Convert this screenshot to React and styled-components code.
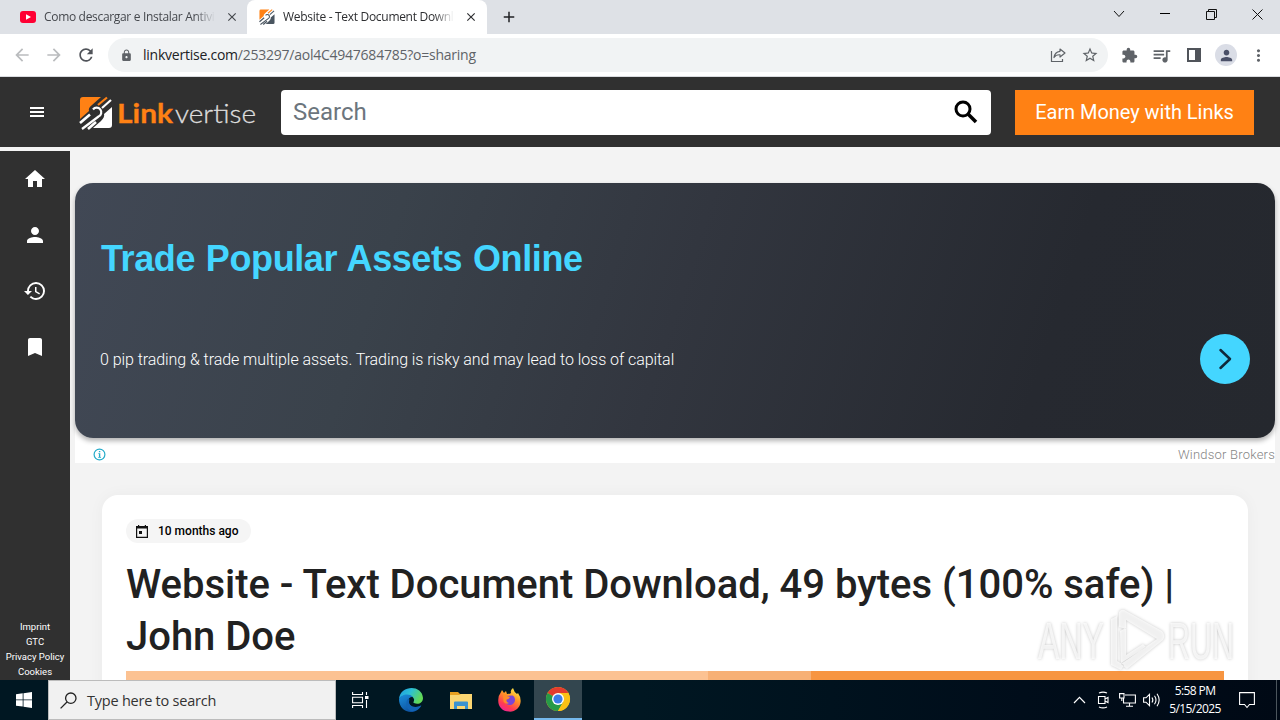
import React from 'react';
import styled, { createGlobalStyle } from 'styled-components';
import {
	MdArrowBack, MdArrowForward, MdRefresh, MdLock, MdStarBorder, MdExtension, MdQueueMusic,
	MdPerson, MdMoreVert, MdHome, MdHistory, MdBookmark, MdClose, MdAdd,
} from 'react-icons/md';

const GlobalStyle = createGlobalStyle`
	* {
		box-sizing: border-box;
	}
	body {
		margin: 0;
		overflow: hidden;
		font-family: Roboto, "Liberation Sans", sans-serif;
	}
	svg {
		display: block;
		flex: none;
		overflow: visible;
	}
`;

const Screen = styled.div`
	position: relative;
	width: 1280px;
	height: 720px;
	display: flex;
	flex-direction: column;
	overflow: hidden;
	background: #f3f3f3;
`;

/* browser */
const TabStrip = styled.div`
	height: 34px;
	flex: none;
	display: flex;
	justify-content: space-between;
	background: #dee1e6;
	color: #202124;
`;

const Tabs = styled.div`
	display: flex;
	align-items: center;
`;

const Tab = styled.div`
	width: ${p => p.$width}px;
	height: 34px;
	padding: 0 ${p => p.$right}px 0 ${p => p.$left}px;
	display: flex;
	align-items: center;
	background: ${p => (p.$active ? '#fff' : 'transparent')};
	border-radius: 8px 8px 0 0;
	color: ${p => (p.$active ? '#2d2e31' : '#45484d')};
`;

const TabTitle = styled.div`
	flex: 1;
	margin: 0 10px 0 ${p => p.$gap}px;
	overflow: hidden;
	white-space: nowrap;
	font: 12px/16px "Open Sans", "Noto Sans", sans-serif;
	letter-spacing: ${p => p.$spacing}px;
	mask-image: linear-gradient(to right, #000 88%, transparent 100%);
`;

const NewTab = styled.div`
	margin-left: 13px;
`;

const WindowButtons = styled.div`
	width: 184px;
	height: 28px;
	display: grid;
	grid-template-columns: repeat(4, 46px);
	place-items: center;
`;

const Toolbar = styled.div`
	height: 43px;
	flex: none;
	display: flex;
	align-items: center;
	padding: 0 11px 0 12px;
	background: #fff;
	border-bottom: 1px solid #dadce0;
	color: #5f6368;
`;

const NavButtons = styled.div`
	width: 96px;
	display: flex;
	gap: 12px;
	color: ${p => p.color};
`;

const AddressBar = styled.div`
	width: 1000px;
	height: 34px;
	flex: none;
	display: flex;
	align-items: center;
	padding: 0 9px 0 12px;
	border-radius: 17px;
	background: #f1f3f4;
`;

const Url = styled.div`
	flex: 1;
	margin-left: 10px;
	font: 14px/20px "Open Sans", "Noto Sans", sans-serif;
	letter-spacing: -0.24px;
	color: #5f6368;

	span {
		color: #202124;
	}
`;

const Extensions = styled.div`
	display: flex;
	align-items: center;
	margin-left: 13px;
`;

const Avatar = styled.div`
	width: 22px;
	height: 22px;
	margin: 0 12px 0 14px;
	display: grid;
	place-items: center;
	border-radius: 50%;
	background: #dadde6;
	color: #4a5068;
`;

/* site */
const Header = styled.header`
	height: 70px;
	flex: none;
	display: flex;
	align-items: center;
	padding: 0 26px 1px 30px;
	background: #303030;
	color: #fff;
`;

const Logo = styled.div`
	width: 177px;
	margin: 3px 25px 0 35px;
`;

const SearchField = styled.div`
	width: 710px;
	height: 45px;
	flex: none;
	display: flex;
	align-items: center;
	justify-content: space-between;
	margin-top: 1px;
	padding: 0 13px 0 12px;
	border-radius: 4px;
	background: #fff;
	color: #6c757d;
	font-size: 24px;
`;

const EarnButton = styled.div`
	width: 239px;
	height: 45px;
	flex: none;
	margin: 1px 0 0 24px;
	display: grid;
	place-items: center;
	background: #ff8114;
	color: #fff;
	font-size: 20px;
	letter-spacing: -0.04px;
	white-space: nowrap;
`;

const Page = styled.div`
	height: 533px;
	flex: none;
	display: flex;
	overflow: hidden;
`;

const Sidebar = styled.nav`
	width: 70px;
	height: 529px;
	margin-top: 4px;
	flex: none;
	display: flex;
	flex-direction: column;
	justify-content: space-between;
	background: #303030;
	color: #fff;
`;

const SideIcons = styled.div`
	display: flex;
	flex-direction: column;
	align-items: center;
	gap: 32px;
	padding-top: 16px;
`;

const SideLinks = styled.div`
	display: flex;
	flex-direction: column;
	align-items: center;
	padding-bottom: 1px;
	font-size: 9.5px;
	line-height: 15px;
	letter-spacing: 0;
	white-space: nowrap;
`;

const Content = styled.main`
	width: 1210px;
	padding: 36px 5px 0;
	display: flex;
	flex-direction: column;
`;

const Ad = styled.div`
	height: 280px;
	flex: none;
	background: #fff;
	border-radius: 18px 18px 0 0;
`;

const Banner = styled.div`
	height: 255px;
	padding: 51px 25px 0;
	border-radius: 18px;
	background: linear-gradient(108deg, #414855 0%, #3a424b 26%, #32363f 50%, #262930 80%, #25282e 100%);
	box-shadow: 0 3px 5px rgba(0, 0, 0, 0.3);
`;

const BannerTitle = styled.div`
	padding-left: 1px;
	font: bold 36px/50px "Liberation Sans", sans-serif;
	letter-spacing: -0.4px;
	word-spacing: 1.2px;
	color: #44d6ff;
	white-space: nowrap;
`;

const BannerRow = styled.div`
	margin-top: 50px;
	display: flex;
	align-items: center;
	justify-content: space-between;
	color: #fff;
	font-size: 16px;
	font-weight: 300;
	letter-spacing: -0.065px;
`;

const RoundButton = styled.div`
	width: 50px;
	height: 50px;
	border-radius: 50%;
	display: grid;
	place-items: center;
	background: #44d6ff;
`;

const AdFooter = styled.div`
	height: 25px;
	padding: 8px 0 0 18px;
	display: flex;
	align-items: center;
	justify-content: space-between;
	color: #858585;
	font: 300 13px/17px Roboto, sans-serif;
	letter-spacing: 0.22px;
`;

const Card = styled.section`
	width: 1146px;
	height: 240px;
	flex: none;
	margin: 32px 0 0 27px;
	padding: 24px 24px 0;
	background: #fff;
	border-radius: 16px 16px 0 0;
	box-shadow: 0 0 16px rgba(0, 0, 0, 0.04);
`;

const DateChip = styled.div`
	width: 125px;
	height: 24px;
	display: flex;
	align-items: center;
	gap: 10px;
	padding-left: 10px;
	border-radius: 12px;
	background: #f5f5f5;
	color: #000;
	font-size: 12px;
	font-weight: 500;
	white-space: nowrap;
`;

const Title = styled.h1`
	margin: 16px 0 0;
	font-size: 40px;
	font-weight: 500;
	line-height: 52px;
	letter-spacing: -0.02px;
	color: #212121;
	white-space: nowrap;
`;

const OrangeBar = styled.div`
	height: 40px;
	margin-top: 8px;
	background: linear-gradient(to right, #fcc292 0 53%, #f7b075 53% 62.4%, #f79541 62.4%);
`;

/* desktop */
const Taskbar = styled.div`
	height: 40px;
	flex: none;
	display: flex;
	justify-content: space-between;
	background: linear-gradient(to right, #001722 0%, #001722 50%, #000d1a 80%, #000915 100%);
	color: #fff;
`;

const TaskGroup = styled.div`
	display: flex;
	align-items: center;
`;

const TaskButton = styled.div`
	width: ${p => p.$width}px;
	height: 40px;
	display: grid;
	place-items: center;
	background: ${p => (p.$active ? '#33464f' : 'transparent')};
	border-bottom: ${p => (p.$active ? '2px solid #76b9ed' : '0')};
`;

const TaskSearch = styled.div`
	width: 288px;
	height: 40px;
	display: flex;
	align-items: center;
	gap: 10px;
	padding: 1px 0 0 11px;
	background: #f1f1f1;
	border: 1px solid #bcbcbc;
	color: #333;
	font: 14.5px/20px "Open Sans", sans-serif;
	letter-spacing: -0.23px;
`;

const TrayIcons = styled.div`
	display: grid;
	grid-template-columns: repeat(4, 24px);
	place-items: center;
`;

const Clock = styled.div`
	width: 64px;
	margin-right: 12px;
	text-align: center;
	font: 12px/18px "Open Sans", sans-serif;
	letter-spacing: -0.6px;
`;

const Notices = styled.div`
	width: 38px;
	height: 40px;
	display: flex;
	align-items: center;
	margin-right: 3px;
	border-right: 1px solid #4b555c;
`;

const Watermark = styled.div`
	position: absolute;
	left: 1032px;
	top: 604px;
	filter: drop-shadow(0 0 1.5px rgba(0, 0, 0, 0.3));
`;

const YoutubeIcon = () => (
	<svg width="16" height="12" viewBox="0 0 16 12">
		<rect width="16" height="12" rx="3" fill="#ff0033" />
		<path d="M6 3.2L11 6L6 8.8Z" fill="#fff" />
	</svg>
);

const Mark = ({ size, light = '#fff' }) => (
	<svg width={size} height={size} viewBox="0 0 34 34" fill="none">
		<path d="M4 1H22L13 9Q9 12 10 15L1 23V4Q1 1 4 1Z" fill="#ff8114" />
		<path d="M33 11V29Q33 32 30 32H14L22 25Q26 21 25 18Z" fill={light} />
		<path d="M19 9L28 1.5" stroke="#ff8114" strokeWidth="2.2" />
		<path d="M23 12L32 4" stroke={light} strokeWidth="2.2" />
		<path d="M1 27L11 18.5M9 33L17 26" stroke={light} strokeWidth="2.6" />
		<path d="M14 13.5A4.6 4.6 0 1 1 19.5 20.5L3 33" stroke={light} strokeWidth="2.2" />
	</svg>
);

const LogoArt = () => (
	<svg width="177" height="34" viewBox="0 0 177 34" fontFamily="Lato, sans-serif">
		<Mark size={34} />
		<text x="38" y="27" fontSize="27" fontWeight="700" fill="#ff8114" stroke="#ff8114" strokeWidth="0.3" textLength="56" lengthAdjust="spacingAndGlyphs">Link</text>
		<text x="96" y="27" fontSize="26" fontWeight="300" fill="#ddd" stroke="#ddd" strokeWidth="0.3" textLength="81" lengthAdjust="spacingAndGlyphs">vertise</text>
	</svg>
);

const MenuIcon = () => (
	<svg width="14" height="10" viewBox="0 0 14 10">
		<path d="M0 0H14V2H0ZM0 4H14V6H0ZM0 8H14V10H0Z" fill="#fff" />
	</svg>
);

const SearchIcon = () => (
	<svg width="24" height="24" viewBox="0 0 24 24" fill="none" stroke="#000" strokeWidth="3">
		<circle cx="9" cy="9" r="7" />
		<path d="M14 14L22 22" strokeWidth="3.6" />
	</svg>
);

const ShareIcon = () => (
	<svg width="16" height="16" viewBox="0 0 16 16" fill="none" stroke="#5f6368" strokeWidth="1.2">
		<path d="M1.5 4V14.5H12.5V12" />
		<path d="M10 2L15 6L10 10V7.8Q6 7.5 4 10.5Q4.7 5 10 4.3Z" strokeLinejoin="round" />
	</svg>
);

const PanelIcon = () => (
	<svg width="14" height="14" viewBox="0 0 14 14">
		<path d="M1 1H13V13H1Z" fill="none" stroke="#50545a" strokeWidth="2" />
		<path d="M8 1H13V13H8Z" fill="#50545a" />
	</svg>
);

const CalendarIcon = () => (
	<svg width="12" height="13" viewBox="0 0 12 13">
		<path d="M.6 1.6H11.4V12.4H.6Z" fill="none" stroke="#111" strokeWidth="1.2" />
		<path d="M0 1H12V3.5H0ZM2 0H3.2V2H2ZM8.8 0H10V2H8.8ZM3 6H6V9H3Z" fill="#111" />
	</svg>
);

const InfoIcon = () => (
	<svg width="13" height="13" viewBox="0 0 13 13">
		<circle cx="6.5" cy="6.5" r="5.4" fill="none" stroke="#24abc9" strokeWidth="1.2" />
		<path d="M5.9 3H7.3V4.3H5.9ZM5.3 5.3H7.3V9H8V9.8H5.2V9H5.9V6H5.3Z" fill="#24abc9" />
	</svg>
);

const WindowsIcon = () => (
	<svg width="16" height="16" viewBox="0 0 16 16" fill="#fff">
		<path d="M0 2.2L6.7 1.3V7.5H0ZM7.5 1.2L16 0V7.5H7.5ZM0 8.3H6.7V14.6L0 13.7ZM7.5 8.3H16V16L7.5 14.8Z" />
	</svg>
);

const TaskSearchIcon = () => (
	<svg width="17" height="17" viewBox="0 0 17 17" fill="none" stroke="#222" strokeWidth="1.3">
		<circle cx="10.8" cy="6.2" r="5.2" />
		<path d="M7 10L.6 16.4" />
	</svg>
);

const TaskViewIcon = () => (
	<svg width="17" height="16" viewBox="0 0 17 16" fill="none" stroke="#fff" strokeWidth="1.1">
		<path d="M.6 0V2.5H10.5V0M.6 16V13.5H10.5V16M.6 5.3H10.5V10.7H.6ZM14.5 0V3M14.5 8V16" />
		<path d="M13 4H16.5V7H13Z" fill="#fff" stroke="none" />
	</svg>
);

const EdgeIcon = () => (
	<svg width="24" height="24" viewBox="0 0 24 24">
		<defs>
			<linearGradient id="edgeTop" x1="0" y1="0" x2="1" y2="0.4">
				<stop offset="0" stopColor="#1f9be2" />
				<stop offset="0.5" stopColor="#2cc0d5" />
				<stop offset="1" stopColor="#62d957" />
			</linearGradient>
			<linearGradient id="edgeLow" x1="0" y1="0" x2="0.6" y2="1">
				<stop offset="0" stopColor="#1b8edb" />
				<stop offset="1" stopColor="#0c4f9e" />
			</linearGradient>
		</defs>
		<path d="M0 11C1-3 23-4 24 10C24 15 19 17 15 15C13.6 14.3 15.5 13.4 15 11C13 6 3 6 0 11Z" fill="url(#edgeTop)" />
		<path d="M0 11C2 6 11 5 14 9C9 8 8 14 11 17C14 20 19 19.6 22 17.5C19 24 12 25 8 23.3C3 21.5 0 17 0 11Z" fill="url(#edgeLow)" />
		<path d="M8.5 11C5 18 10 25 16 22.8C19 22 21 20 22.4 17.3C16 21 8 18 10.5 11.5Z" fill="#1264b5" />
	</svg>
);

const FolderIcon = () => (
	<svg width="22" height="19" viewBox="0 0 22 19">
		<path d="M0 1H8L10 3H21V8H0Z" fill="#e8a020" />
		<path d="M0 4H9L11 3H22V18H0Z" fill="#fbd672" />
		<path d="M4 11.5Q4 10.5 5 10.5H17Q18 10.5 18 11.5V18H15V15H7V18H4Z" fill="#3b92cf" />
	</svg>
);

const FirefoxIcon = () => (
	<svg width="23" height="24" viewBox="0 0 23 24">
		<defs>
			<linearGradient id="fox" x1="0.8" y1="0" x2="0.25" y2="1">
				<stop offset="0" stopColor="#fff04a" />
				<stop offset="0.4" stopColor="#ff9426" />
				<stop offset="0.75" stopColor="#ff3b52" />
				<stop offset="1" stopColor="#ee2299" />
			</linearGradient>
		</defs>
		<path d="M2.5 5L4 2L6 5L8 3L9 6Q12 6 13 5Q12 2 15 0Q16 4 19 6L20 5Q23 9 22.6 14C22 20 17 24 11 23.6C4 23.3-.3 18 .3 11.5Q.6 7 2.5 5Z" fill="url(#fox)" />
		<path d="M8 8L14.5 7.5C19 10 17 17 12 17C8 17 6 14 7.3 11.4L11 11Z" fill="#7b45d6" />
		<path d="M5 7Q7 6 9 8L12 9Q11 11 8.5 11.5Q8 14 11 15Q8 17 5.5 13.5Z" fill="#ff8b28" />
	</svg>
);

const ChromeIcon = () => (
	<svg width="24" height="24" viewBox="0 0 24 24">
		<circle cx="12" cy="12" r="12" fill="#fbc116" />
		<path d="M12 12L1.6 6A12 12 0 0 1 22.4 6Z" fill="#e33b2e" />
		<path d="M12 12L1.6 6A12 12 0 0 0 12 24L17.2 15Z" fill="#269a48" />
		<path d="M12 6H22.4A12 12 0 0 1 12 24L17.2 15Z" fill="#fbc116" />
		<circle cx="12" cy="12" r="6" fill="#fff" />
		<circle cx="12" cy="12" r="4.6" fill="#3b7de9" />
	</svg>
);

const Tray = () => (
	<TrayIcons>
		<svg width="13" height="8" viewBox="0 0 13 8" fill="none" stroke="#fff" strokeWidth="1.2"><path d="M1 7L6.5 1.3L12 7" /></svg>
		<svg width="12" height="18" viewBox="6 0 12 18" fill="none" stroke="#fff" strokeWidth="1.1">
			<path d="M7.5 5.5H14V12.5H7.5ZM14 8L17 6.5V11.5L14 10M8 2Q12 .2 16 2M8 16Q12 17.8 16 16" />
		</svg>
		<svg width="17" height="14" viewBox="0 0 17 14" fill="none" stroke="#fff" strokeWidth="1.1">
			<path d="M6 2H16.4V10H4.5V5M.6 .6H5V5H.6ZM2.8 5V8M10.5 10V13M7 13.2H14" />
		</svg>
		<svg width="17" height="14" viewBox="0 0 17 14" fill="none" stroke="#fff" strokeWidth="1.1">
			<path d="M.6 4.8H3L6.5 1.3V12.7L3 9.2H.6ZM9 4.5Q10.7 7 9 9.5M11.5 2.7Q14.5 7 11.5 11.3M14 .8Q18.3 7 14 13.2" />
		</svg>
	</TrayIcons>
);

const AnyRun = () => (
	<Watermark>
		<svg width="206" height="70" viewBox="0 0 206 70" fill="#fff" fillOpacity="0.72" fontFamily="Liberation Sans, sans-serif">
			<text x="6" y="55" fontSize="52" textLength="66" lengthAdjust="spacingAndGlyphs">ANY</text>
			<text x="136" y="55" fontSize="52" textLength="66" lengthAdjust="spacingAndGlyphs">RUN</text>
			<path fillRule="evenodd" d="M79 15L85 12V57L92 61L89 66L79 61ZM87 8Q90 4 94 7L130 27Q134 31 131 36L95 65L89 60L125 35L94 16V25L87 23ZM88 27L94 24V51L111 40L114 43L89 59Z" />
		</svg>
	</Watermark>
);

const App = () => {
	const links = ['Imprint', 'GTC', 'Privacy Policy', 'Cookies'];
	return (
		<Screen>
			<GlobalStyle />
			<TabStrip>
				<Tabs>
					<Tab $width={247} $left={20} $right={8}>
						<YoutubeIcon />
						<TabTitle $gap={8} $spacing={-0.32}>Como descargar e Instalar Antivirus</TabTitle>
						<MdClose size={14} />
					</Tab>
					<Tab $active $width={240} $left={12} $right={9}>
						<Mark size={16} light="#4a5560" />
						<TabTitle $gap={8} $spacing={-0.3}>Website - Text Document Download</TabTitle>
						<MdClose size={14} />
					</Tab>
					<NewTab><MdAdd size={18} /></NewTab>
				</Tabs>
				<WindowButtons>
					<svg width="12" height="8" viewBox="0 0 12 8" fill="none" stroke="#111"><path d="M1 1L6 6.5L11 1" /></svg>
					<svg width="10" height="2" viewBox="0 0 10 2"><path d="M0 0H10V1H0Z" /></svg>
					<svg width="11" height="11" viewBox="0 0 11 11" fill="none" stroke="#111"><path d="M.5 2.5H8.5V10.5H.5ZM2.5 2.5V.5H10.5V8.5H8.5" /></svg>
					<svg width="11" height="11" viewBox="0 0 11 11" fill="none" stroke="#111"><path d="M.5 .5L10.5 10.5M10.5 .5L.5 10.5" /></svg>
				</WindowButtons>
			</TabStrip>
			<Toolbar>
				<NavButtons color="#babcbe">
					<MdArrowBack size={20} />
					<MdArrowForward size={20} />
					<MdRefresh size={20} color="#505359" />
				</NavButtons>
				<AddressBar>
					<MdLock size={13} />
					<Url><span>linkvertise.com</span>/253297/aol4C4947684785?o=sharing</Url>
					<ShareIcon />
					<MdStarBorder size={18} style={{ marginLeft: 15 }} />
				</AddressBar>
				<Extensions>
					<MdExtension size={17} />
					<MdQueueMusic size={21} style={{ margin: '0 15px 0 13px' }} />
					<PanelIcon />
					<Avatar><MdPerson size={17} /></Avatar>
					<MdMoreVert size={19} />
				</Extensions>
			</Toolbar>
			<Header>
				<MenuIcon />
				<Logo><LogoArt /></Logo>
				<SearchField>
					Search
					<SearchIcon />
				</SearchField>
				<EarnButton>Earn Money with Links</EarnButton>
			</Header>
			<Page>
				<Sidebar>
					<SideIcons>
						<MdHome size={24} />
						<MdPerson size={24} />
						<MdHistory size={24} />
						<MdBookmark size={24} />
					</SideIcons>
					<SideLinks>
						{links.map(link => <span key={link}>{link}</span>)}
					</SideLinks>
				</Sidebar>
				<Content>
					<Ad>
						<Banner>
							<BannerTitle>Trade Popular Assets Online</BannerTitle>
							<BannerRow>
								0 pip trading &amp; trade multiple assets. Trading is risky and may lead to loss of capital
								<RoundButton>
									<svg width="12" height="20" viewBox="0 0 12 20" fill="none" stroke="#10283a" strokeWidth="2.5" strokeLinecap="round" strokeLinejoin="round">
										<path d="M1.5 1L11 10L1.5 19" />
									</svg>
								</RoundButton>
							</BannerRow>
						</Banner>
						<AdFooter>
							<InfoIcon />
							Windsor Brokers
						</AdFooter>
					</Ad>
					<Card>
						<DateChip><CalendarIcon />10 months ago</DateChip>
						<Title>Website - Text Document Download, 49 bytes (100% safe) |<br />John Doe</Title>
						<OrangeBar />
					</Card>
				</Content>
			</Page>
			<Taskbar>
				<TaskGroup>
					<TaskButton $width={48}><WindowsIcon /></TaskButton>
					<TaskSearch><TaskSearchIcon />Type here to search</TaskSearch>
					<TaskButton $width={49}><TaskViewIcon /></TaskButton>
					<TaskButton $width={52}><EdgeIcon /></TaskButton>
					<TaskButton $width={47}><FolderIcon /></TaskButton>
					<TaskButton $width={50}><FirefoxIcon /></TaskButton>
					<TaskButton $width={48} $active><ChromeIcon /></TaskButton>
				</TaskGroup>
				<TaskGroup>
					<Tray />
					<Clock>5:58 PM<br />5/15/2025</Clock>
					<Notices>
						<svg width="16" height="17" viewBox="0 0 16 17" fill="none" stroke="#fff" strokeWidth="1.1"><path d="M.6 .6H15.4V12.5H10.5L8 15.5L5.5 12.5H.6Z" /></svg>
					</Notices>
				</TaskGroup>
			</Taskbar>
			<AnyRun />
		</Screen>
	);
};

export default App;
